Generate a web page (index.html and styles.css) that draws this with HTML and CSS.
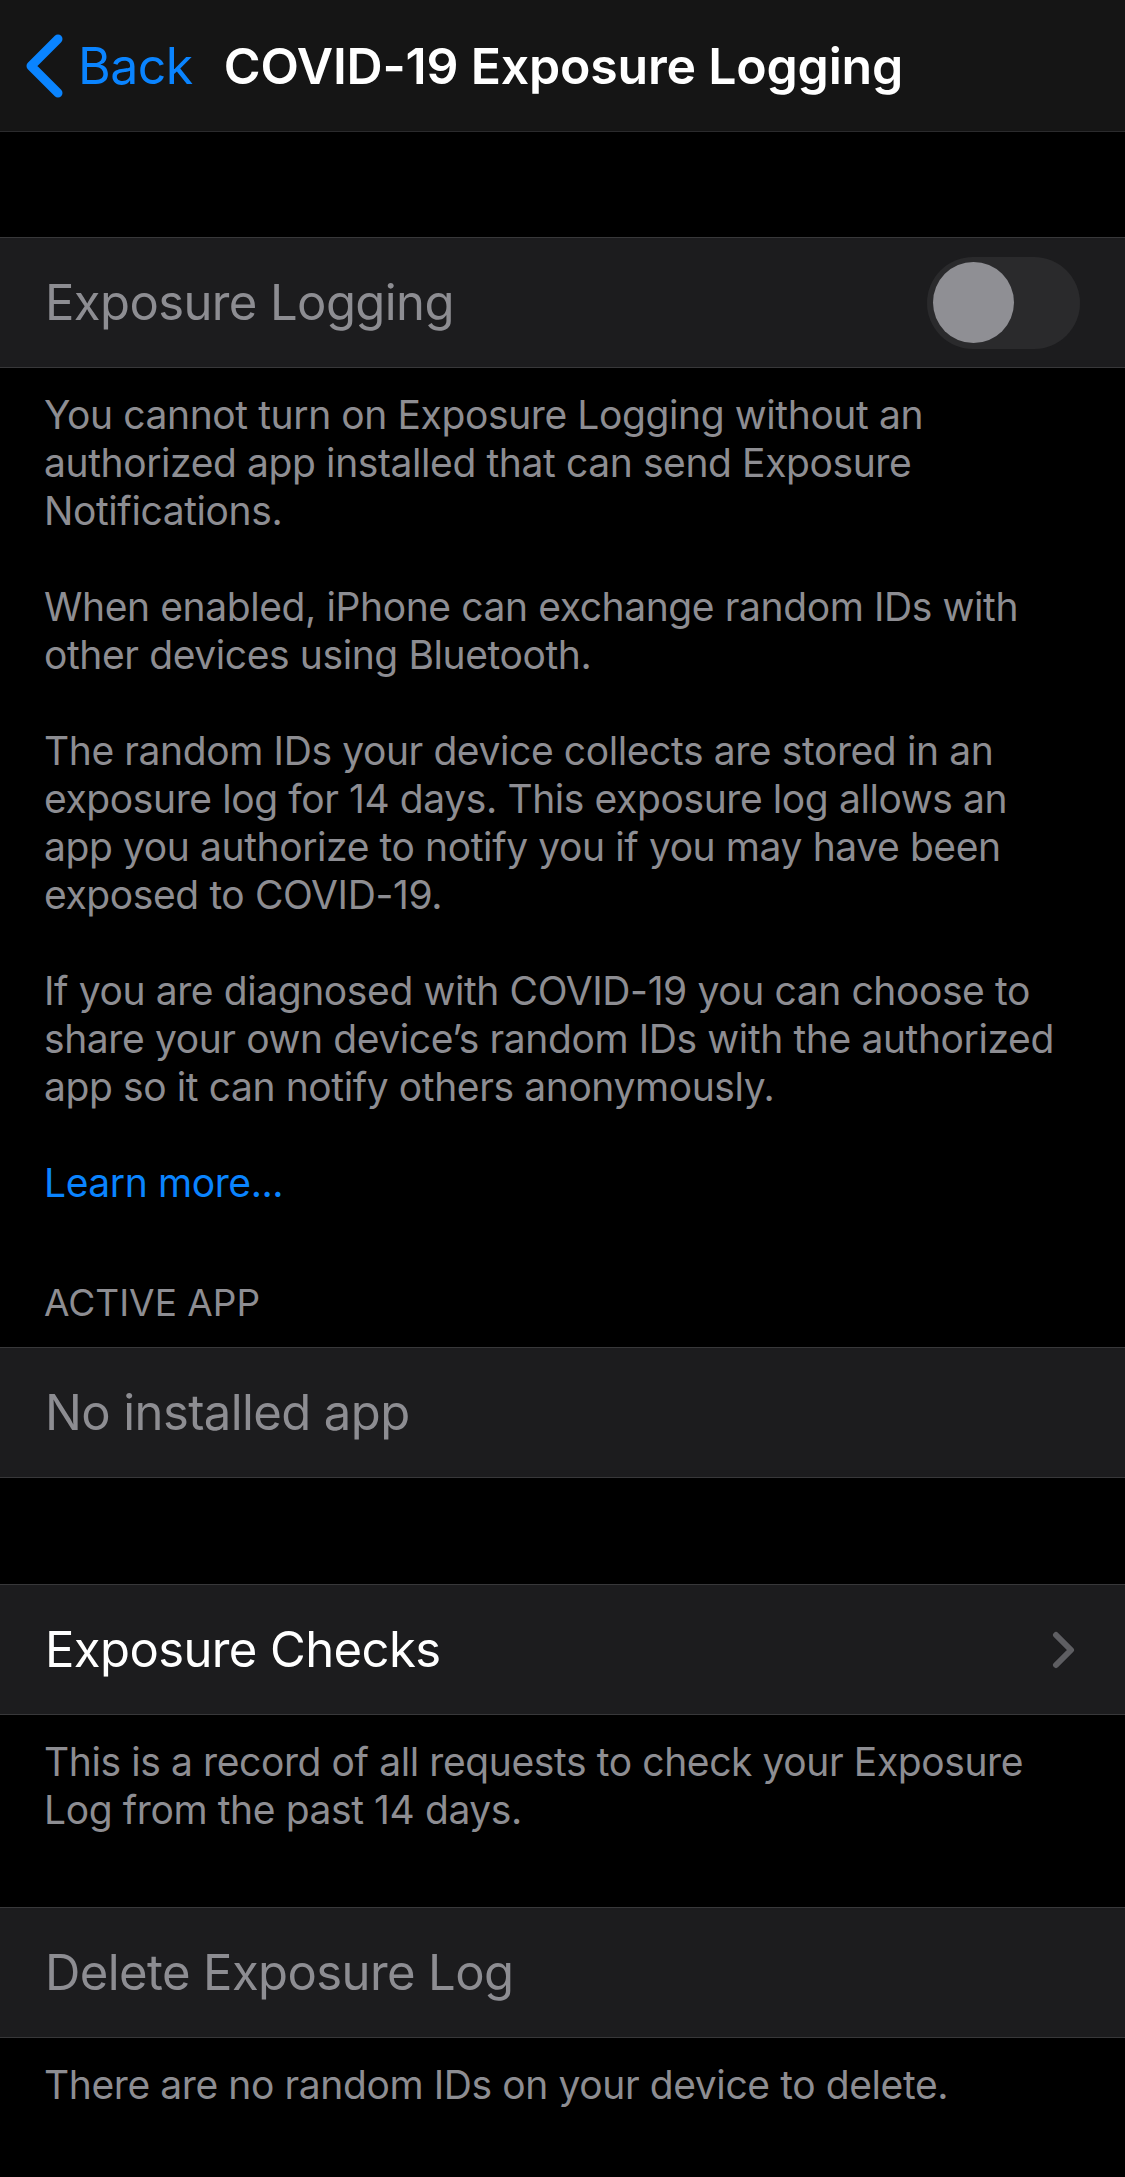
FILE: index.html
```html
<!DOCTYPE html>
<html lang="en">
<head>
    <meta charset="UTF-8">
    <meta name="viewport" content="width=device-width, initial-scale=1.0">
    <title>COVID-19 Exposure Logging</title>
    <link rel="stylesheet" href="styles.css">
</head>
<body>
    <div class="nav">
        <a class="back" href="#">
            <svg class="back-icon" width="38" height="66" viewBox="0 0 38 66">
                <path d="M33 6 L6 33 L33 60" fill="none" stroke="#0a84ff" stroke-width="9" stroke-linecap="round" stroke-linejoin="round"/>
            </svg>
            Back
        </a>
        <div class="nav-title">COVID-19 Exposure Logging</div>
    </div>

    <div class="group first">
        <div class="row">
            <span class="label dim">Exposure Logging</span>
            <div class="toggle"><div class="knob"></div></div>
        </div>
    </div>

    <div class="footer">
        <p>You cannot turn on Exposure Logging without an<br>authorized app installed that can send Exposure<br>Notifications.</p>
        <p>When enabled, iPhone can exchange random IDs with<br>other devices using Bluetooth.</p>
        <p>The random IDs your device collects are stored in an<br>exposure log for 14 days. This exposure log allows an<br>app you authorize to notify you if you may have been<br>exposed to COVID-19.</p>
        <p>If you are diagnosed with COVID-19 you can choose to<br>share your own device’s random IDs with the authorized<br>app so it can notify others anonymously.</p>
        <p><a class="link" href="#">Learn more...</a></p>
    </div>

    <div class="section-header">ACTIVE APP</div>
    <div class="group">
        <div class="row">
            <span class="label dim">No installed app</span>
        </div>
    </div>

    <div class="group spaced">
        <div class="row">
            <span class="label">Exposure Checks</span>
            <svg class="chevron" width="24" height="38" viewBox="0 0 24 38">
                <path d="M4 4 L19 19 L4 34" fill="none" stroke="#5e5e62" stroke-width="6" stroke-linecap="round" stroke-linejoin="round"/>
            </svg>
        </div>
    </div>

    <div class="footer">
        <p>This is a record of all requests to check your Exposure<br>Log from the past 14 days.</p>
    </div>

    <div class="group delete">
        <div class="row">
            <span class="label dim">Delete Exposure Log</span>
        </div>
    </div>

    <div class="footer">
        <p>There are no random IDs on your device to delete.</p>
    </div>
</body>
</html>
```

FILE: styles.css
```css
body {
    margin: 0;
    background: #000;
    font-family: Inter, "Noto Sans", sans-serif;
    color: #fff;
    width: 1125px;
    min-height: 2177px;
}
.nav {
    height: 131px;
    background: #151515;
    border-bottom: 1px solid #2b2b2d;
    display: flex;
    align-items: center;
    padding: 0 0 0 25px;
}
.back {
    display: flex;
    align-items: center;
    gap: 15px;
    color: #0a84ff;
    text-decoration: none;
    font-size: 50px;
    letter-spacing: -0.5px;
    margin-right: 31px;
}
.back-icon {
    display: block;
}
.nav-title {
    font-size: 50px;
    font-weight: 600;
    letter-spacing: -0.2px;
}
.group {
    background: #1c1c1e;
    border-top: 1px solid #38383a;
    border-bottom: 1px solid #38383a;
}
.group.first {
    margin-top: 105px;
}
.group.spaced {
    margin-top: 106px;
}
.group.delete {
    margin-top: 73px;
}
.row {
    height: 129px;
    display: flex;
    align-items: center;
    justify-content: space-between;
    padding: 0 46px 0 45px;
}
.label {
    font-size: 49px;
    letter-spacing: -0.6px;
}
.dim {
    color: #8d8d92;
}
.toggle {
    width: 153px;
    height: 92px;
    border-radius: 46px;
    background: #2a2a2c;
    margin-right: -1px;
    display: flex;
    align-items: center;
    padding-left: 6px;
    box-sizing: border-box;
}
.knob {
    width: 81px;
    height: 81px;
    border-radius: 50%;
    background: #8f8f94;
}
.chevron {
    display: block;
    margin-right: 3px;
}
.footer {
    padding: 23px 46px 0 44px;
    color: #8d8d92;
    font-size: 39px;
    line-height: 48px;
    letter-spacing: -0.4px;
}
.footer p {
    margin: 0 0 48px;
}
.footer p:last-child {
    margin-bottom: 0;
}
.link {
    color: #0a84ff;
    text-decoration: none;
}
.section-header {
    padding: 72px 46px 20px 44px;
    color: #8d8d92;
    font-size: 37px;
    line-height: 48px;
}
```
